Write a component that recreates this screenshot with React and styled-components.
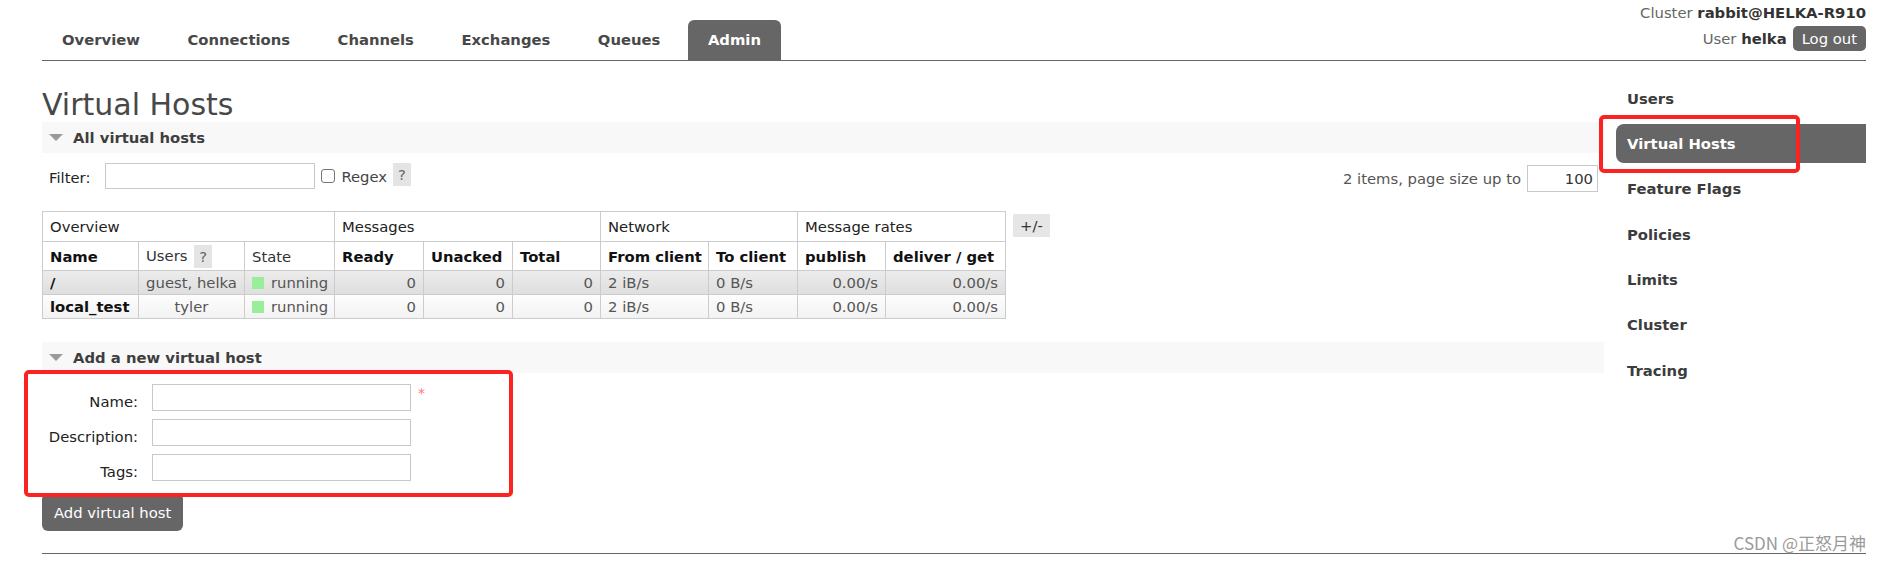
import React from 'react'
import styled, { createGlobalStyle } from 'styled-components'

const GlobalStyle = createGlobalStyle`
  html, body {
    margin: 0;
    padding: 0;
    background: #fff;
  }
  body {
    font-family: 'DejaVu Sans', Verdana, sans-serif;
    font-size: 14.8px;
    color: #484848;
  }
  input, button {
    font-family: 'DejaVu Sans', Verdana, sans-serif;
    font-size: 14.8px;
  }
`

const tabs = ['Overview', 'Connections', 'Channels', 'Exchanges', 'Queues', 'Admin']
const adminLinks = ['Users', 'Virtual Hosts', 'Feature Flags', 'Policies', 'Limits', 'Cluster', 'Tracing']
const colWidths = [96, 106, 90, 89, 89, 88, 108, 89, 88, 120]
const vhosts = [
  { name: '/', users: 'guest, helka', ready: 0, unacked: 0, total: 0, from: '2 iB/s', to: '0 B/s', publish: '0.00/s', deliver: '0.00/s' },
  { name: 'local_test', users: 'tyler', ready: 0, unacked: 0, total: 0, from: '2 iB/s', to: '0 B/s', publish: '0.00/s', deliver: '0.00/s' },
]

export default function App() {
  return (
    <>
      <GlobalStyle />
      <Page>
        <Header>
          <Menu>
            {tabs.map(t => (
              <Tab key={t} $selected={t === 'Admin'}>{t}</Tab>
            ))}
          </Menu>
          <Login>
            <LoginLine>Cluster <b>rabbit@HELKA-R910</b></LoginLine>
            <LoginLine>User <b>helka</b><LogOut>Log out</LogOut></LoginLine>
          </Login>
        </Header>

        <Body>
          <Main>
            <Title>Virtual Hosts</Title>
            <SectionHead><Arrow />All virtual hosts</SectionHead>

            <FilterRow>
              <FilterLeft>
                <FilterLabel>Filter:</FilterLabel>
                <FilterInput type="text" />
                <Check type="checkbox" />
                <RegexLabel>Regex</RegexLabel>
                <Help>?</Help>
              </FilterLeft>
              <PageSize>
                2 items, page size up to
                <PageInput type="text" defaultValue="100" />
              </PageSize>
            </FilterRow>

            <TableWrap>
              <List>
                <colgroup>
                  {colWidths.map((w, i) => <Col key={i} $w={w} />)}
                </colgroup>
                <thead>
                  <GroupRow>
                    <GroupTh colSpan={3}>Overview</GroupTh>
                    <GroupTh colSpan={3}>Messages</GroupTh>
                    <GroupTh colSpan={2}>Network</GroupTh>
                    <GroupTh colSpan={2}>Message rates</GroupTh>
                  </GroupRow>
                  <HeadRow>
                    <Th>Name</Th>
                    <Th $plain>Users <Help>?</Help></Th>
                    <Th $plain>State</Th>
                    <Th>Ready</Th>
                    <Th>Unacked</Th>
                    <Th>Total</Th>
                    <Th>From client</Th>
                    <Th>To client</Th>
                    <Th>publish</Th>
                    <Th>deliver / get</Th>
                  </HeadRow>
                </thead>
                <tbody>
                  {vhosts.map((v, i) => (
                    <DataRow key={v.name} $alt={i % 2 === 0}>
                      <NameCell>{v.name}</NameCell>
                      <Td $align="center">{v.users}</Td>
                      <Td><StateDot />running</Td>
                      <Td $align="right">{v.ready}</Td>
                      <Td $align="right">{v.unacked}</Td>
                      <Td $align="right">{v.total}</Td>
                      <Td>{v.from}</Td>
                      <Td>{v.to}</Td>
                      <Td $align="right">{v.publish}</Td>
                      <Td $align="right">{v.deliver}</Td>
                    </DataRow>
                  ))}
                </tbody>
              </List>
              <Toggle>+/-</Toggle>
            </TableWrap>

            <SectionHead $gap={23}><Arrow />Add a new virtual host</SectionHead>

            <Form>
              <FormLabel>Name:</FormLabel>
              <FormInput type="text" />
              <Mandatory>*</Mandatory>
              <FormLabel>Description:</FormLabel>
              <FormInput type="text" />
              <span />
              <FormLabel>Tags:</FormLabel>
              <FormInput type="text" />
              <span />
            </Form>
            <Button>Add virtual host</Button>
          </Main>

          <Sidebar>
            {adminLinks.map(l => (
              <SideLink key={l} $selected={l === 'Virtual Hosts'}>{l}</SideLink>
            ))}
          </Sidebar>
        </Body>

        <Footer />
        <Watermark>CSDN @正怒月神</Watermark>
        <Marker $left={1599} $top={115} $w={201} $h={58} />
        <Marker $left={24} $top={370} $w={489} $h={127} />
      </Page>
    </>
  )
}

const Page = styled.div`
  position: relative;
  width: 1879px;
  height: 561px;
  padding: 0 13px 0 42px;
  box-sizing: border-box;
  overflow: hidden;
`
const Header = styled.div`
  display: flex;
  justify-content: space-between;
  align-items: flex-end;
  height: 60px;
  border-bottom: 1px solid #666;
`
const Menu = styled.ul`
  display: flex;
  margin: 0;
  padding: 0;
  list-style: none;
`
const Tab = styled.li`
  height: 40px;
  line-height: 40px;
  padding: 0 20px;
  margin-right: 7.5px;
  font-weight: bold;
  color: ${p => (p.$selected ? '#fff' : '#484848')};
  background: ${p => (p.$selected ? '#666' : 'transparent')};
  border-radius: 6px 6px 0 0;
`
const Login = styled.div`
  align-self: flex-start;
  display: flex;
  flex-direction: column;
  align-items: flex-end;
  padding-top: 3px;
  gap: 4px;
  color: #666;
  b {
    color: #333;
  }
`
const LoginLine = styled.div`
  display: flex;
  align-items: center;
  min-height: 19px;
  white-space: pre;
`
const LogOut = styled.span`
  margin-left: 6px;
  height: 25px;
  line-height: 25px;
  padding: 0 9px;
  border-radius: 5px;
  background: #666;
  color: #fff;
`
const Body = styled.div`
  display: flex;
  align-items: flex-start;
`
const Main = styled.div`
  flex: 1;
  padding-top: 26px;
`
const Title = styled.h1`
  margin: 0;
  font-size: 30px;
  line-height: 35px;
  font-weight: normal;
  color: #484848;
`
const SectionHead = styled.h2`
  display: flex;
  align-items: center;
  height: 31px;
  margin: ${p => p.$gap || 0}px 0 0;
  padding-left: 7px;
  background: #f8f8f8;
  font-size: 14.8px;
  font-weight: bold;
  color: #3e3e3e;
`
const Arrow = styled.span`
  width: 0;
  height: 0;
  margin-right: 10px;
  border-left: 7px solid transparent;
  border-right: 7px solid transparent;
  border-top: 7px solid #9a9a9a;
`
const FilterRow = styled.div`
  display: flex;
  justify-content: space-between;
  align-items: flex-start;
  height: 29px;
  margin-top: 10px;
  padding: 0 6px 0 7px;
`
const FilterLeft = styled.div`
  display: flex;
  align-items: center;
  height: 26px;
`
const FilterLabel = styled.label`
  margin-right: 15px;
  color: #222;
  padding-top: 3px;
`
const FilterInput = styled.input`
  box-sizing: border-box;
  width: 210px;
  height: 26px;
  margin: 0;
  border: 1px solid #c8c8c8;
  padding: 0 4px;
`
const Check = styled.input`
  appearance: none;
  box-sizing: border-box;
  width: 14px;
  height: 14px;
  margin: 0 0 0 6px;
  border: 1px solid #777;
  border-radius: 3px;
  background: #fff;
`
const RegexLabel = styled.span`
  margin-left: 6px;
  color: #444;
`
const Help = styled.span`
  display: inline-block;
  height: 23px;
  line-height: 23px;
  padding: 0 5px;
  margin-left: 6px;
  background: #e4e4e4;
  color: #666;
  font-weight: normal;
  align-self: flex-start;
  vertical-align: middle;
`
const PageSize = styled.div`
  display: flex;
  align-items: center;
  margin-top: 2px;
  color: #555;
`
const PageInput = styled.input`
  box-sizing: border-box;
  width: 71px;
  height: 27px;
  margin: 0 0 0 6px;
  border: 1px solid #c8c8c8;
  padding: 0 4px;
  text-align: right;
  color: #333;
`
const TableWrap = styled.div`
  display: flex;
  align-items: flex-start;
  margin-top: 19px;
`
const List = styled.table`
  width: 963px;
  table-layout: fixed;
  border-collapse: collapse;
`
const Col = styled.col`
  width: ${p => p.$w}px;
`
const GroupRow = styled.tr`
  height: 30px;
`
const GroupTh = styled.th`
  border: 1px solid #ccc;
  padding: 0 7px;
  text-align: left;
  font-weight: normal;
  color: #222;
`
const HeadRow = styled.tr`
  height: 29px;
`
const Th = styled.th`
  border: 1px solid #ccc;
  padding: 0 7px;
  text-align: left;
  white-space: nowrap;
  font-weight: ${p => (p.$plain ? 'normal' : 'bold')};
  color: ${p => (p.$plain ? '#333' : '#111')};
  ${Help} {
    margin-left: 2px;
  }
`
const DataRow = styled.tr`
  height: 24px;
  background: ${p => (p.$alt ? 'linear-gradient(#ececec, #dedede)' : 'linear-gradient(#fdfdfd, #f2f2f2)')};
`
const Td = styled.td`
  border: 1px solid #ccc;
  padding: 0 7px;
  white-space: nowrap;
  text-align: ${p => p.$align || 'left'};
  color: #555;
`
const NameCell = styled(Td)`
  font-weight: bold;
  color: #111;
`
const StateDot = styled.span`
  display: inline-block;
  width: 12px;
  height: 12px;
  margin-right: 7px;
  background: #99ee99;
  vertical-align: -1px;
`
const Toggle = styled.span`
  margin: 3px 0 0 7px;
  height: 23px;
  line-height: 23px;
  padding: 0 7px;
  background: #e6e6e6;
  color: #333;
`
const Form = styled.div`
  display: grid;
  grid-template-columns: 96px 259px auto;
  column-gap: 14px;
  row-gap: 8px;
  margin-top: 11px;
  justify-content: start;
`
const FormLabel = styled.label`
  text-align: right;
  padding-top: 9px;
  color: #222;
`
const FormInput = styled.input`
  box-sizing: border-box;
  width: 259px;
  height: 27px;
  margin: 0;
  border: 1px solid #c8c8c8;
  padding: 0 4px;
`
const Mandatory = styled.span`
  margin-left: -7px;
  padding-top: 1px;
  color: #f77;
  font-size: 14px;
`
const Button = styled.button`
  display: block;
  height: 38px;
  margin-top: 12px;
  padding: 0 12px;
  border: none;
  border-radius: 6px;
  background: #666;
  color: #fff;
`
const Sidebar = styled.div`
  width: 250px;
  margin-left: 12px;
  padding-top: 17.7px;
  display: flex;
  flex-direction: column;
  gap: 6.33px;
`
const SideLink = styled.div`
  height: 39px;
  line-height: 39px;
  padding-left: 11px;
  font-weight: bold;
  color: ${p => (p.$selected ? '#fff' : '#3c3c3c')};
  background: ${p => (p.$selected ? '#666' : 'transparent')};
  border-radius: 8px 0 0 8px;
`
const Footer = styled.div`
  margin-top: 22px;
  border-top: 1px solid #666;
`
const Watermark = styled.div`
  position: absolute;
  right: 13px;
  top: 530px;
  font-family: 'Noto Sans CJK SC', sans-serif;
  font-size: 17px;
  color: #9a9a9a;
  text-shadow: 0 0 1px #fff;
`
const Marker = styled.div`
  position: absolute;
  left: ${p => p.$left}px;
  top: ${p => p.$top}px;
  width: ${p => p.$w}px;
  height: ${p => p.$h}px;
  box-sizing: border-box;
  border: 4px solid #fb2222;
  border-radius: 5px;
  pointer-events: none;
`
